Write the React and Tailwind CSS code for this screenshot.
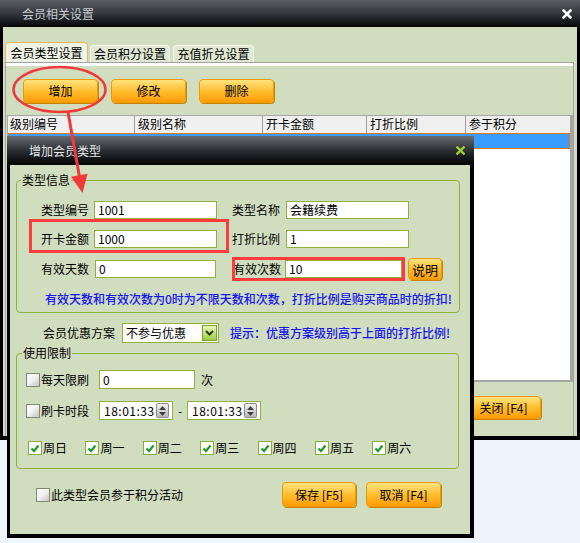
import React from "react";

function OrangeBtn({ children, className = "" }) {
  return (
    <div
      className={`flex items-center justify-center rounded-[4px] border border-[#eb9a00] bg-linear-to-b from-[#ffe47c] via-[#ffbe2c] to-[#ff9c00] text-[12px] leading-none text-black shadow-[1px_1px_0_#c88400] ${className}`}
    >
      {children}
    </div>
  );
}

function XMark({ color, size = 10 }) {
  return (
    <svg width={size} height={size} viewBox="0 0 10 10">
      <path d="M1.5 1.5 L8.5 8.5 M8.5 1.5 L1.5 8.5" stroke={color} strokeWidth="2.6" strokeLinecap="square" />
    </svg>
  );
}

function Box({ checked }) {
  if (checked) {
    return (
      <div className="flex h-[14px] w-[14px] shrink-0 items-center justify-center border border-[#82b038] bg-white">
        <svg width="10" height="9" viewBox="0 0 10 9">
          <path d="M1.5 4.5 L4 7 L8.5 1.5" stroke="#1f9a2a" strokeWidth="2.2" fill="none" />
        </svg>
      </div>
    );
  }
  return <div className="h-[14px] w-[14px] shrink-0 border border-[#7e8a74] bg-linear-to-br from-white via-[#f0f0f0] to-[#c4c4c4]" />;
}

function Input({ value, className = "" }) {
  return (
    <div className={`flex h-[18px] items-center border border-[#8fb23c] bg-white pl-[3px] text-[12px] ${className}`}>
      {value}
    </div>
  );
}

function Spinner() {
  return (
    <div className="flex h-[15px] w-[13px] flex-col items-center justify-center gap-[2px] rounded-[2px] border border-[#8c8c8c] bg-linear-to-b from-[#f4f4f4] to-[#b8b8b8]">
      <svg width="7" height="4" viewBox="0 0 7 4">
        <path d="M0 4 L3.5 0 L7 4 Z" fill="#404040" />
      </svg>
      <svg width="7" height="4" viewBox="0 0 7 4">
        <path d="M0 0 L3.5 4 L7 0 Z" fill="#404040" />
      </svg>
    </div>
  );
}

function TimeInput() {
  return (
    <div className="flex h-[19px] w-[74px] items-center justify-between border border-[#8fb23c] bg-white pl-[4px] pr-[3px] text-[12px]">
      <span className="tracking-[0.5px]">18:01:33</span>
      <Spinner />
    </div>
  );
}

export default function App() {
  const days = ["周日", "周一", "周二", "周三", "周四", "周五", "周六"];
  return (
    <div className="relative h-[543px] w-[580px] overflow-hidden bg-[#eef5fd] font-['Noto_Sans_CJK_SC','Noto_Sans',sans-serif] text-[12px] leading-[16px] text-black">
      {/* main window */}
      <div className="flex h-[440px] w-[580px] flex-col bg-black">
        <div className="flex h-[27px] items-center justify-between bg-linear-to-b from-[#5a5e64] via-[#34383e] to-[#060708] pl-[22px] pr-[8px]">
          <span className="text-[#c6cacf]">会员相关设置</span>
          <XMark color="#ffffff" />
        </div>
        <div className="mx-[3px] mb-[4px] flex flex-1 flex-col bg-[#d1ddbf] pt-[16px]">
          {/* tabs */}
          <div className="flex h-[19px] items-end gap-[2px] pl-[2px]">
            <div className="flex h-[20px] w-[83px] items-center justify-center rounded-t-[4px] border border-b-0 border-[#f0b55a] bg-[#eef3e6]">
              会员类型设置
            </div>
            <div className="flex h-[17px] w-[80px] items-center justify-center rounded-t-[4px] border border-b-0 border-[#f4f6ee] bg-[#e1e9d5]">
              会员积分设置
            </div>
            <div className="ml-[1px] flex h-[17px] w-[81px] items-center justify-center rounded-t-[4px] border border-b-0 border-[#f4f6ee] bg-[#e1e9d5]">
              充值折兑设置
            </div>
          </div>
          {/* panel */}
          <div className="ml-[2px] mr-[3px] flex flex-1 flex-col border-t border-l border-r border-[#a2a2a2]">
            <div className="h-[3px] bg-white" />
            <div className="flex h-[49px] gap-[13px] pl-[17px] pt-[13px]">
              <OrangeBtn className="h-[24px] w-[75px]">增加</OrangeBtn>
              <OrangeBtn className="h-[24px] w-[75px]">修改</OrangeBtn>
              <OrangeBtn className="h-[24px] w-[75px]">删除</OrangeBtn>
            </div>
            <div className="ml-[1px] flex h-[267px] flex-col border-t border-b-2 border-r-[3px] border-l border-[#a6a6a6] bg-white">
              <div className="flex h-[17px] bg-[#f0f0f0]">
                <div className="w-[127px] border-r border-[#a0a0a0] pl-[2px]">级别编号</div>
                <div className="w-[128px] border-r border-[#a0a0a0] pl-[3px]">级别名称</div>
                <div className="w-[104px] border-r border-[#a0a0a0] pl-[3px]">开卡金额</div>
                <div className="w-[99px] border-r border-[#a0a0a0] pl-[3px]">打折比例</div>
                <div className="flex-1 pl-[3px]">参于积分</div>
              </div>
              <div className="h-[16px] border border-[#e07a10] bg-[#3a9cff]" />
            </div>
            <div className="flex h-[50px] justify-end pr-[32px] pt-[14px]">
              <OrangeBtn className="h-[23px] w-[75px]">关闭 [F4]</OrangeBtn>
            </div>
          </div>
        </div>
      </div>

      {/* dialog */}
      <div className="absolute left-[7px] top-[136px] flex h-[402px] w-[467px] flex-col bg-black">
        <div className="flex h-[29px] items-center justify-between bg-linear-to-b from-[#6a6e74] via-[#2c3034] to-[#040506] pl-[22px] pr-[9px]">
          <span className="text-[#e4e6e8]">增加会员类型</span>
          <XMark color="#9ccc30" size={9} />
        </div>
        <div className="mb-[4px] ml-[3px] mr-[4px] flex flex-1 flex-col bg-[#d1ddbf]">
          <fieldset className="ml-[6px] mt-[7px] w-[444px] rounded-[4px] border border-[#8db33a] pb-[5px]">
            <legend className="ml-[4px] px-[1px] leading-[16px]">类型信息</legend>
            <div className="mt-[13px] flex h-[18px] items-center">
              <div className="w-[72px] text-right">类型编号</div>
              <Input value="1001" className="ml-[5px] w-[123px]" />
              <div className="ml-[15px] w-[54px]">类型名称</div>
              <Input value="会籍续费" className="w-[123px]" />
            </div>
            <div className="mt-[11px] flex h-[18px] items-center">
              <div className="w-[72px] text-right">开卡金额</div>
              <Input value="1000" className="ml-[5px] w-[123px]" />
              <div className="ml-[15px] w-[54px]">打折比例</div>
              <Input value="1" className="w-[123px]" />
            </div>
            <div className="mt-[10px] flex h-[22px] items-center">
              <div className="w-[72px] text-right">有效天数</div>
              <Input value="0" className="ml-[6px] w-[121px]" />
              <div className="ml-[17px] w-[52px]">有效次数</div>
              <Input value="10" className="w-[117px]" />
              <OrangeBtn className="ml-[6px] h-[22px] w-[34px] !text-[13px]">说明</OrangeBtn>
            </div>
            <div className="mt-[11px] whitespace-nowrap pl-[28px] text-[12px] font-medium text-[#1414f5]">
              有效天数和有效次数为0时为不限天数和次数，打折比例是购买商品时的折扣!
            </div>
          </fieldset>

          <div className="mt-[10px] flex h-[20px] items-center pl-[33px]">
            <div>会员优惠方案</div>
            <div className="ml-[7px] flex h-[20px] w-[97px] items-center justify-between border border-[#8fb23c] bg-white pl-[3px] pr-[1px]">
              <span>不参与优惠</span>
              <div className="flex h-[16px] w-[15px] items-center justify-center border border-[#7aa030] bg-linear-to-b from-[#eaf6b8] to-[#9ccc3c]">
                <svg width="9" height="6" viewBox="0 0 9 6">
                  <path d="M1 1 L4.5 4.5 L8 1" stroke="#2c3a10" strokeWidth="2" fill="none" />
                </svg>
              </div>
            </div>
            <div className="ml-[11px] whitespace-nowrap font-medium text-[#1414f5]">提示：优惠方案级别高于上面的打折比例!</div>
          </div>

          <fieldset className="ml-[6px] mt-[2px] w-[443px] rounded-[4px] border border-[#8db33a] pb-[13px]">
            <legend className="ml-[5px] px-[1px] leading-[16px]">使用限制</legend>
            <div className="mt-[9px] flex h-[19px] items-center pl-[9px]">
              <Box />
              <div className="ml-[1px] w-[58px]">每天限刷</div>
              <Input value="0" className="h-[19px] w-[96px]" />
              <div className="ml-[6px]">次</div>
            </div>
            <div className="mt-[12px] flex h-[19px] items-center pl-[9px]">
              <Box />
              <div className="ml-[1px] w-[58px]">刷卡时段</div>
              <TimeInput />
              <div className="w-[14px] text-center">-</div>
              <TimeInput />
            </div>
            <div className="mt-[21px] flex h-[14px] items-center pl-[11px]">
              {days.map((d) => (
                <div key={d} className="flex w-[57.4px] items-center">
                  <Box checked />
                  <span className="ml-[1px]">{d}</span>
                </div>
              ))}
            </div>
          </fieldset>

          <div className="mt-[13px] flex h-[25px] items-center pl-[26px] pr-[29px]">
            <Box />
            <span className="ml-[1px]">此类型会员参于积分活动</span>
            <OrangeBtn className="ml-auto h-[25px] w-[74px]">保存 [F5]</OrangeBtn>
            <OrangeBtn className="ml-[10px] h-[25px] w-[75px]">取消 [F4]</OrangeBtn>
          </div>
        </div>
      </div>

      {/* annotations */}
      <div className="absolute left-[29px] top-[219px] h-[34px] w-[200px] border-[3px] border-[#ff3b3b]" />
      <div className="absolute left-[232px] top-[257px] h-[24px] w-[173px] border-[3px] border-[#ff3b3b]" />
      <svg className="absolute left-0 top-0" width="200" height="200" viewBox="0 0 200 200">
        <ellipse cx="59.5" cy="89.5" rx="46" ry="22.5" fill="none" stroke="#f03a3a" strokeWidth="2.5" />
        <line x1="68" y1="112" x2="79.5" y2="177" stroke="#f03a3a" strokeWidth="3" />
        <polygon points="71,176.7 87.5,173.8 82.5,193" fill="#f03a3a" />
      </svg>
    </div>
  );
}
